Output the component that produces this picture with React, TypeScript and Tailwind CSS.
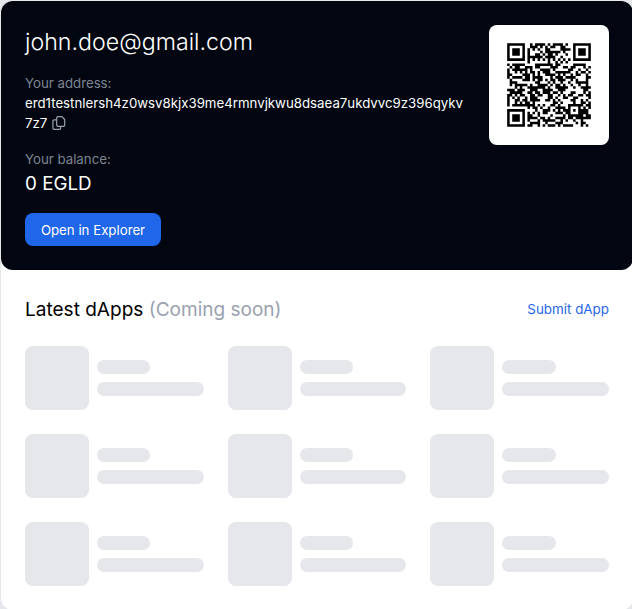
import React from 'react';

const ADDRESS = 'erd1testnlersh4z0wsv8kjx39me4rmnvjkwu8dsaea7ukdvvc9z396qykv7z7';

// QR version 4, error correction level M: two blocks of 32 data + 18 check codewords.
const SIZE = 33;
const BLOCK = 32;
const CHECK = 18;

function gfMul(a: number, b: number): number {
  let r = 0;
  for (let i = 7; i >= 0; i--) {
    r = (r << 1) ^ ((r >>> 7) * 0x11d);
    if ((b >>> i) & 1) r ^= a;
  }
  return r;
}

function errorCorrection(data: number[]): number[] {
  const gen = new Array<number>(CHECK).fill(0);
  gen[CHECK - 1] = 1;
  let root = 1;
  for (let i = 0; i < CHECK; i++) {
    for (let j = 0; j < CHECK; j++) {
      gen[j] = gfMul(gen[j], root);
      if (j + 1 < CHECK) gen[j] ^= gen[j + 1];
    }
    root = gfMul(root, 2);
  }
  const rem = new Array<number>(CHECK).fill(0);
  for (const b of data) {
    const f = b ^ (rem.shift() as number);
    rem.push(0);
    gen.forEach((g, i) => (rem[i] ^= gfMul(g, f)));
  }
  return rem;
}

function codewords(text: string): number[] {
  const total = BLOCK * 2;
  const bits: number[] = [];
  const push = (v: number, n: number) => {
    for (let i = n - 1; i >= 0; i--) bits.push((v >>> i) & 1);
  };
  push(4, 4);
  push(text.length, 8);
  for (const c of text) push(c.charCodeAt(0), 8);
  push(0, Math.min(4, total * 8 - bits.length));
  while (bits.length % 8) bits.push(0);
  for (let pad = 0xec; bits.length < total * 8; pad ^= 0xec ^ 0x11) push(pad, 8);
  const data: number[] = [];
  for (let i = 0; i < bits.length; i += 8) data.push(parseInt(bits.slice(i, i + 8).join(''), 2));
  const a = data.slice(0, BLOCK);
  const b = data.slice(BLOCK);
  const ea = errorCorrection(a);
  const eb = errorCorrection(b);
  const out: number[] = [];
  a.forEach((v, i) => out.push(v, b[i]));
  ea.forEach((v, i) => out.push(v, eb[i]));
  return out;
}

const MASKS: ((x: number, y: number) => boolean)[] = [
  (x, y) => (x + y) % 2 === 0,
  (_x, y) => y % 2 === 0,
  (x) => x % 3 === 0,
  (x, y) => (x + y) % 3 === 0,
  (x, y) => (Math.floor(x / 3) + Math.floor(y / 2)) % 2 === 0,
  (x, y) => ((x * y) % 2) + ((x * y) % 3) === 0,
  (x, y) => (((x * y) % 2) + ((x * y) % 3)) % 2 === 0,
  (x, y) => (((x + y) % 2) + ((x * y) % 3)) % 2 === 0,
];

function build(words: number[], mask: number): boolean[][] {
  const m = Array.from({ length: SIZE }, () => new Array<boolean>(SIZE).fill(false));
  const fn = Array.from({ length: SIZE }, () => new Array<boolean>(SIZE).fill(false));
  const set = (x: number, y: number, v: boolean) => {
    if (x < 0 || y < 0 || x >= SIZE || y >= SIZE) return;
    m[y][x] = v;
    fn[y][x] = true;
  };
  for (let i = 0; i < SIZE; i++) {
    set(6, i, i % 2 === 0);
    set(i, 6, i % 2 === 0);
  }
  for (const [cx, cy] of [[3, 3], [SIZE - 4, 3], [3, SIZE - 4]]) {
    for (let dy = -4; dy <= 4; dy++)
      for (let dx = -4; dx <= 4; dx++) {
        const d = Math.max(Math.abs(dx), Math.abs(dy));
        set(cx + dx, cy + dy, d !== 2 && d !== 4);
      }
  }
  for (let dy = -2; dy <= 2; dy++)
    for (let dx = -2; dx <= 2; dx++) set(26 + dx, 26 + dy, Math.max(Math.abs(dx), Math.abs(dy)) !== 1);

  let rem = mask;
  for (let i = 0; i < 10; i++) rem = (rem << 1) ^ ((rem >>> 9) * 0x537);
  const f = ((mask << 10) | rem) ^ 0x5412;
  const bit = (i: number) => ((f >>> i) & 1) === 1;
  for (let i = 0; i <= 5; i++) set(8, i, bit(i));
  set(8, 7, bit(6));
  set(8, 8, bit(7));
  set(7, 8, bit(8));
  for (let i = 9; i < 15; i++) set(14 - i, 8, bit(i));
  for (let i = 0; i < 8; i++) set(SIZE - 1 - i, 8, bit(i));
  for (let i = 8; i < 15; i++) set(8, SIZE - 15 + i, bit(i));
  set(8, SIZE - 8, true);

  let n = 0;
  for (let right = SIZE - 1; right >= 1; right -= 2) {
    if (right === 6) right = 5;
    for (let v = 0; v < SIZE; v++)
      for (let j = 0; j < 2; j++) {
        const x = right - j;
        const y = ((right + 1) & 2) === 0 ? SIZE - 1 - v : v;
        if (fn[y][x]) continue;
        const dark = n < words.length * 8 && ((words[n >>> 3] >>> (7 - (n & 7))) & 1) === 1;
        n++;
        m[y][x] = dark !== MASKS[mask](x, y);
      }
  }
  return m;
}

function penalty(m: boolean[][]): number {
  let score = 0;
  let dark = 0;
  const lines = [
    ...m.map((r) => r.map((c) => (c ? '1' : '0')).join('')),
    ...m.map((_, x) => m.map((r) => (r[x] ? '1' : '0')).join('')),
  ];
  for (const l of lines) {
    for (const run of l.match(/0{5,}|1{5,}/g) ?? []) score += run.length - 2;
    for (let i = 0; i + 11 <= l.length; i++) {
      const s = l.slice(i, i + 11);
      if (s === '10111010000' || s === '00001011101') score += 40;
    }
  }
  for (let y = 0; y < SIZE; y++)
    for (let x = 0; x < SIZE; x++) {
      if (m[y][x]) dark++;
      if (x && y && m[y][x] === m[y - 1][x] && m[y][x] === m[y][x - 1] && m[y][x] === m[y - 1][x - 1]) score += 3;
    }
  return score + Math.abs(Math.ceil((dark * 100) / (SIZE * SIZE) / 5) - 10) * 10;
}

function QrCode({ text }: { text: string }) {
  const words = codewords(text);
  const all = MASKS.map((_, i) => build(words, i));
  const best = all.reduce((a, b) => (penalty(b) < penalty(a) ? b : a));
  const d = best
    .map((row, y) => row.map((on, x) => (on ? `M${x} ${y}h1v1h-1z` : '')).join(''))
    .join('');
  return (
    <svg viewBox="-4 -4 41 41" className="size-[104px]">
      <path d={d} fill="#000" />
    </svg>
  );
}

function CopyIcon() {
  return (
    <svg viewBox="0 0 14 14" className="ml-[5px] inline-block size-3.5 align-[-2px]" fill="none" stroke="#9ca3af" strokeWidth="1.2">
      <path d="M6 .7h3.8l2.9 2.9v5.4a1.3 1.3 0 0 1-1.3 1.3H6A1.3 1.3 0 0 1 4.7 9V2A1.3 1.3 0 0 1 6 .7z" />
      <path d="M4.4 3.9H2.2A1.3 1.3 0 0 0 .9 5.2V12a1.3 1.3 0 0 0 1.3 1.3h5.2A1.3 1.3 0 0 0 8.7 12v-1.5" />
    </svg>
  );
}

function Placeholder() {
  return (
    <div className="flex items-center gap-2">
      <div className="size-16 shrink-0 rounded-lg bg-gray-200" />
      <div className="flex flex-1 flex-col gap-2">
        <div className="h-3.5 w-1/2 rounded-full bg-gray-200" />
        <div className="h-3.5 rounded-full bg-gray-200" />
      </div>
    </div>
  );
}

export default function App() {
  return (
    <div className="h-[609px] w-[632px] overflow-hidden bg-gray-200 pt-px pl-px font-['Inter',sans-serif]">
      <div className="w-[632px] rounded-xl bg-white">
        <section className="flex h-[269px] items-start gap-6 rounded-xl bg-[#010610] p-6 text-[13.25px] leading-5 text-white">
          <div className="min-w-0 flex-1">
            <h1 className="h-8 pt-px text-[23.2px] leading-8 font-light">john.doe@gmail.com</h1>
            <p className="mt-4 text-[#7f8490]">Your address:</p>
            <p className="h-10 break-all">
              {ADDRESS}
              <CopyIcon />
            </p>
            <p className="mt-4 text-[#7f8490]">Your balance:</p>
            <p className="h-7 pt-px text-[18.8px] leading-7">0 EGLD</p>
            <button className="mt-4 block h-[33px] w-[136px] rounded-lg bg-[#1f66e9] pt-px text-[13.25px] whitespace-nowrap">
              Open in Explorer
            </button>
          </div>
          <div className="flex size-[120px] shrink-0 items-center justify-center rounded-lg bg-white p-2">
            <QrCode text={ADDRESS} />
          </div>
        </section>
        <section className="flex flex-col gap-6 p-6">
          <div className="flex h-7 items-center justify-between">
            <h2 className="pt-[3px] text-[19.05px] leading-7">
              Latest dApps <span className="text-gray-400">(Coming soon)</span>
            </h2>
            <a className="pt-0.5 text-[13.4px] leading-5 text-[#1f66e9]">Submit dApp</a>
          </div>
          <div className="grid grid-cols-3 gap-6">
            {Array.from({ length: 9 }, (_, i) => (
              <Placeholder key={i} />
            ))}
          </div>
        </section>
      </div>
    </div>
  );
}
